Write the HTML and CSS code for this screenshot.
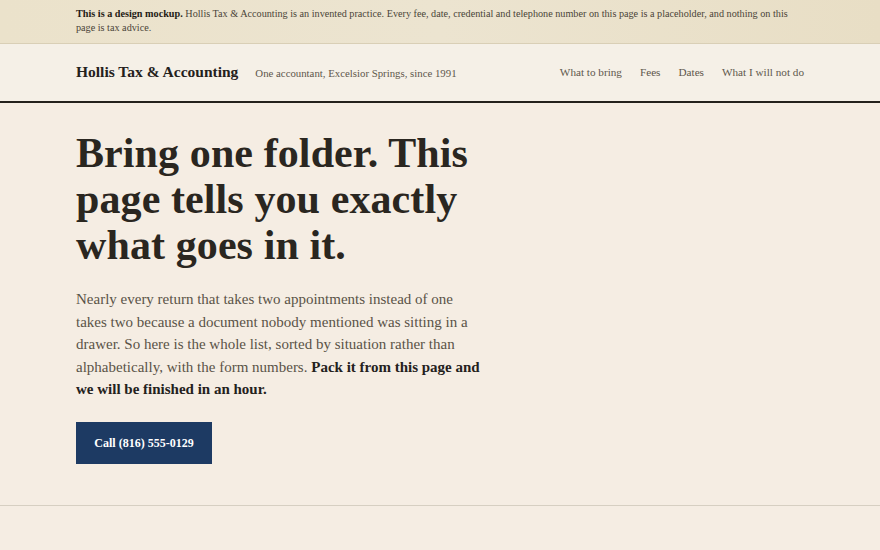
FILE: index.html
```html
<!DOCTYPE html>
<html lang="en">
<head>
<meta charset="utf-8">
<title>Hollis Tax &amp; Accounting</title>
<link rel="stylesheet" href="styles.css">
</head>
<body>
<div class="banner">
  <div class="wrap">
    <p><strong>This is a design mockup.</strong> Hollis Tax &amp; Accounting is an invented practice. Every fee, date, credential and telephone number on this page is a placeholder, and nothing on this page is tax advice.</p>
  </div>
</div>
<header class="site-header">
  <div class="wrap header-row">
    <div class="brand-group">
      <span class="brand">Hollis Tax &amp; Accounting</span>
      <span class="tagline">One accountant, Excelsior Springs, since 1991</span>
    </div>
    <nav class="nav">
      <a href="#">What to bring</a>
      <a href="#">Fees</a>
      <a href="#">Dates</a>
      <a href="#">What I will not do</a>
    </nav>
  </div>
</header>
<main>
  <section class="hero">
    <div class="wrap">
      <h1>Bring one folder. This page tells you exactly what goes in it.</h1>
      <p class="lead">Nearly every return that takes two appointments instead of one takes two because a document nobody mentioned was sitting in a drawer. So here is the whole list, sorted by situation rather than alphabetically, with the form numbers. <strong>Pack it from this page and we will be finished in an hour.</strong></p>
      <a class="btn" href="#">Call (816) 555-0129</a>
    </div>
  </section>
</main>
</body>
</html>
```
FILE: styles.css
```css
* { box-sizing: border-box; }
html, body { margin: 0; padding: 0; }
body {
  background: #f5ede3;
  color: #2a2620;
  font-family: "Liberation Serif", "DejaVu Serif", serif;
}
.wrap {
  width: 728px;
  margin: 0 auto;
}
.banner {
  background: linear-gradient(90deg, #ebe2cb 0%, #ece4d0 50%, #e8dec5 100%);
  border-bottom: 1px solid #d9cfb6;
  height: 44px;
  padding-top: 7px;
}
.banner p {
  margin: 0;
  font-size: 10.2px;
  line-height: 13.5px;
  color: #4a4438;
}
.banner strong { color: #1f1b15; }
.site-header {
  background: #f5f0e7;
  border-bottom: 2px solid #24211c;
  height: 59px;
}
.header-row {
  display: flex;
  align-items: center;
  justify-content: space-between;
  height: 55px;
}
.brand-group {
  display: flex;
  align-items: baseline;
  gap: 17px;
}
.brand {
  font-size: 15.5px;
  font-weight: bold;
  color: #24211c;
}
.tagline {
  font-size: 10.8px;
  color: #5e574c;
}
.nav {
  display: flex;
  gap: 18px;
}
.nav a {
  font-size: 11.2px;
  color: #5e574c;
  text-decoration: none;
}
.hero {
  border-bottom: 1px solid #d6cfc2;
  padding: 27px 0 41px;
}
h1 {
  margin: 0;
  width: 410px;
  font-size: 42px;
  line-height: 46px;
  font-weight: bold;
  color: #2a2620;
  letter-spacing: 0.1px;
}
.lead {
  margin: 20px 0 0;
  width: 404px;
  font-size: 15px;
  line-height: 22.5px;
  color: #5a5347;
}
.lead strong { color: #24211c; }
.btn {
  display: inline-block;
  margin-top: 21px;
  background: #1d3a63;
  color: #ffffff;
  text-decoration: none;
  font-size: 12px;
  font-weight: bold;
  width: 136px;
  height: 42px;
  line-height: 42px;
  text-align: center;
}
```
